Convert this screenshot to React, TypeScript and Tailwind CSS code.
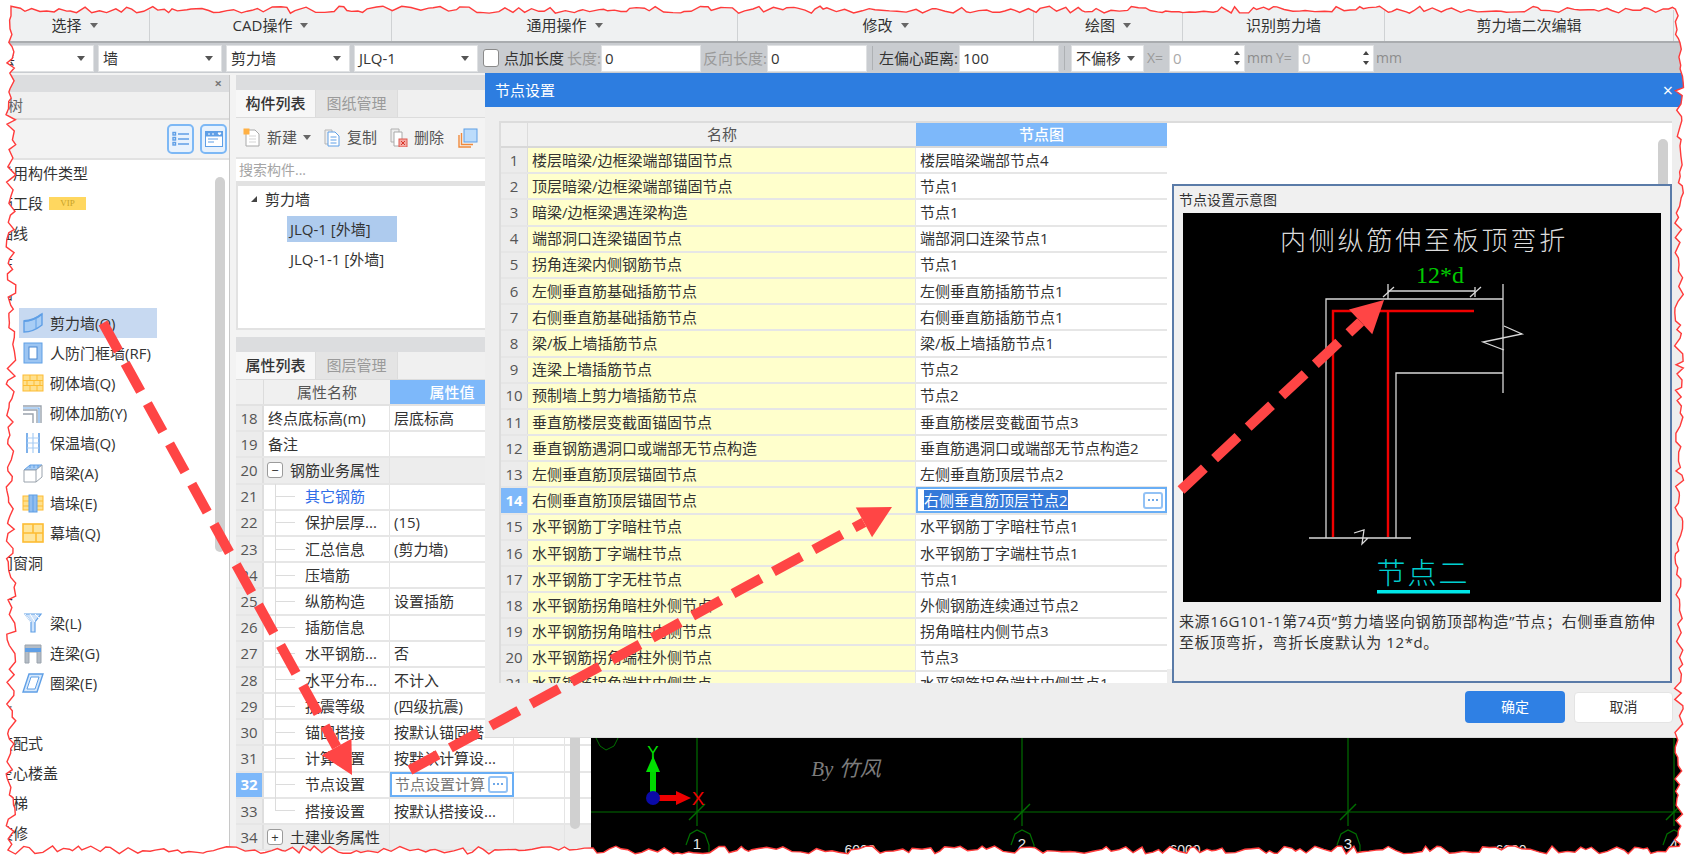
import type { ReactNode } from 'react';

const cjk = "font-['Open_Sans','Noto_Sans_CJK_SC',sans-serif]";

const nodeRows: [string, string][] = [
  ['楼层暗梁/边框梁端部锚固节点', '楼层暗梁端部节点4'],
  ['顶层暗梁/边框梁端部锚固节点', '节点1'],
  ['暗梁/边框梁遇连梁构造', '节点1'],
  ['端部洞口连梁锚固节点', '端部洞口连梁节点1'],
  ['拐角连梁内侧钢筋节点', '节点1'],
  ['左侧垂直筋基础插筋节点', '左侧垂直筋插筋节点1'],
  ['右侧垂直筋基础插筋节点', '右侧垂直筋插筋节点1'],
  ['梁/板上墙插筋节点', '梁/板上墙插筋节点1'],
  ['连梁上墙插筋节点', '节点2'],
  ['预制墙上剪力墙插筋节点', '节点2'],
  ['垂直筋楼层变截面锚固节点', '垂直筋楼层变截面节点3'],
  ['垂直钢筋遇洞口或端部无节点构造', '垂直筋遇洞口或端部无节点构造2'],
  ['左侧垂直筋顶层锚固节点', '左侧垂直筋顶层节点2'],
  ['右侧垂直筋顶层锚固节点', '右侧垂直筋顶层节点2'],
  ['水平钢筋丁字暗柱节点', '水平钢筋丁字暗柱节点1'],
  ['水平钢筋丁字端柱节点', '水平钢筋丁字端柱节点1'],
  ['水平钢筋丁字无柱节点', '节点1'],
  ['水平钢筋拐角暗柱外侧节点', '外侧钢筋连续通过节点2'],
  ['水平钢筋拐角暗柱内侧节点', '拐角暗柱内侧节点3'],
  ['水平钢筋拐角端柱外侧节点', '节点3'],
  ['水平钢筋拐角端柱内侧节点', '水平钢筋拐角端柱内侧节点1'],
];

type Prop = { n: number; name: string; value?: string; kind?: 'plain' | 'section' | 'open' | 'link' | 'child' | 'edit'; last?: boolean };

const props: Prop[] = [
  { n: 18, name: '终点底标高(m)', value: '层底标高', kind: 'plain' },
  { n: 19, name: '备注', kind: 'plain' },
  { n: 20, name: '钢筋业务属性', kind: 'open' },
  { n: 21, name: '其它钢筋', kind: 'link' },
  { n: 22, name: '保护层厚...', value: '(15)' },
  { n: 23, name: '汇总信息', value: '(剪力墙)' },
  { n: 24, name: '压墙筋' },
  { n: 25, name: '纵筋构造', value: '设置插筋' },
  { n: 26, name: '插筋信息' },
  { n: 27, name: '水平钢筋...', value: '否' },
  { n: 28, name: '水平分布...', value: '不计入' },
  { n: 29, name: '抗震等级', value: '(四级抗震)' },
  { n: 30, name: '锚固搭接', value: '按默认锚固搭...' },
  { n: 31, name: '计算设置', value: '按默认计算设...' },
  { n: 32, name: '节点设置', value: '节点设置计算', kind: 'edit' },
  { n: 33, name: '搭接设置', value: '按默认搭接设...', last: true },
  { n: 34, name: '土建业务属性', kind: 'section' },
];

function Caret({ className = 'border-t-[#666]' }: { className?: string }) {
  return <span className={`inline-block w-0 h-0 border-x-[4px] border-x-transparent border-t-[5px] ${className}`} />;
}

function RibbonCell({ w, label, caret = true }: { w: string; label: string; caret?: boolean }) {
  return (
    <div className={`${w} shrink-0 h-[31px] flex items-center justify-center gap-[8px] border-r border-[#cfd2d4] text-[15px] text-[#333]`}>
      <span>{label}</span>
      {caret && <Caret />}
    </div>
  );
}

function Select({ w, label, className = '' }: { w: string; label: string; className?: string }) {
  return (
    <div className={`${w} ${className} shrink-0 h-[27px] bg-white border border-[#dfe1e3] flex items-center justify-between pl-[4px] pr-[8px] text-[15px] text-[#333]`}>
      <span>{label}</span>
      <Caret className="border-t-[#555]" />
    </div>
  );
}

function Field({ w, value, dim = false }: { w: string; value: string; dim?: boolean }) {
  return (
    <div className={`${w} shrink-0 h-[27px] bg-white border border-[#dfe1e3] flex items-center pl-[3px] text-[15px] ${dim ? 'text-[#aaa]' : 'text-[#333]'}`}>
      {value}
    </div>
  );
}

function Spin({ value }: { value: string }) {
  return (
    <div className="w-[76px] shrink-0 h-[27px] bg-white border border-[#dfe1e3] flex items-center justify-between pl-[3px] pr-[4px] text-[15px] text-[#aaa]">
      <span>{value}</span>
      <span className="flex flex-col gap-[6px]">
        <span className="w-0 h-0 border-x-[3px] border-x-transparent border-b-[4px] border-b-[#444]" />
        <span className="w-0 h-0 border-x-[3px] border-x-transparent border-t-[4px] border-t-[#444]" />
      </span>
    </div>
  );
}

function OptionsBar() {
  return (
    <div className="h-[32px] bg-[#c9ccd0] border-t-2 border-[#a9acaf] flex items-center shrink-0">
      <Select w="w-[114px]" label="首层" className="-ml-[20px]" />
      <Select w="w-[124px]" label="墙" className="ml-[4px]" />
      <Select w="w-[124px]" label="剪力墙" className="ml-[4px]" />
      <Select w="w-[124px]" label="JLQ-1" className="ml-[4px]" />
      <span className="ml-[5px] w-[16px] h-[18px] bg-white border border-[#8a8a8a] rounded-[3px] shrink-0" />
      <span className="ml-[5px] text-[15px] text-[#333] w-[63px] shrink-0 whitespace-nowrap">点加长度</span>
      <span className="text-[15px] text-[#9a9a9a] w-[34px] shrink-0 whitespace-nowrap">长度:</span>
      <Field w="w-[100px]" value="0" />
      <span className="ml-[2px] text-[15px] text-[#9a9a9a] w-[64px] shrink-0 whitespace-nowrap">反向长度:</span>
      <Field w="w-[100px]" value="0" />
      <span className="ml-[5px] w-px h-[24px] bg-[#aeb1b4]" />
      <span className="ml-[6px] text-[15px] text-[#333] w-[80px] shrink-0 whitespace-nowrap">左偏心距离:</span>
      <Field w="w-[100px]" value="100" />
      <span className="ml-[5px] w-px h-[24px] bg-[#aeb1b4]" />
      <Select w="w-[73px]" label="不偏移" className="ml-[6px]" />
      <span className="ml-[3px] w-[22px] shrink-0 text-[14px] text-[#9a9a9a]">X=</span>
      <Spin value="0" />
      <span className="ml-[2px] w-[29px] shrink-0 text-[14px] text-[#8d8d8d]">mm</span>
      <span className="w-[22px] shrink-0 text-[14px] text-[#9a9a9a]">Y=</span>
      <Spin value="0" />
      <span className="ml-[2px] text-[14px] text-[#8d8d8d]">mm</span>
    </div>
  );
}

// 左侧构件树的小图标
function TreeIcon({ name }: { name: string }) {
  const b = '#5f9fe6';
  const y = '#fdbc33';
  const g = '#9aa3ad';
  const common = { width: 22, height: 22, viewBox: '0 0 22 22', fill: 'none' };
  switch (name) {
    case 'shear':
      return (
        <svg {...common}>
          <path d="M2 9C9 9 15 6 20 2V13C15 17 9 20 2 20Z" fill="#a8cdf5" stroke={b} strokeWidth="1.4" />
          <path d="M2 9C9 9 15 6 20 2" stroke={b} strokeWidth="2" />
          <path d="M14 7V16" stroke={b} strokeWidth="1" />
        </svg>
      );
    case 'door':
      return (
        <svg {...common}>
          <rect x="2" y="1" width="18" height="20" fill="#9cc5f2" stroke={b} />
          <rect x="7" y="5" width="8" height="12" fill="#fff" stroke="#4a88d0" />
        </svg>
      );
    case 'brick':
      return (
        <svg {...common}>
          <rect x="1" y="3" width="20" height="16" fill="#fee08e" stroke={y} />
          <path d="M1 8.5H21M1 13.5H21M8 3V8.5M15 3V8.5M5 8.5V13.5M12 8.5V13.5M18 8.5V13.5M8 13.5V19M15 13.5V19" stroke={y} />
        </svg>
      );
    case 'rebar':
      return (
        <svg {...common}>
          <path d="M1 4H19V21M1 8H15V21M1 12H11V21" stroke={g} strokeWidth="1.4" />
          <path d="M1 6H17V21" stroke="#6aa7ea" strokeWidth="1.2" />
        </svg>
      );
    case 'insul':
      return (
        <svg {...common}>
          <path d="M5 1V21M17 1V21" stroke={b} strokeWidth="1.6" />
          <path d="M11 1V21M5 6H17M5 11H17M5 16H17" stroke="#a9cdf4" strokeWidth="1.2" />
        </svg>
      );
    case 'hidden':
      return (
        <svg {...common}>
          <path d="M2 8L8 3H20L14 8Z" fill="#a8cdf5" stroke={b} />
          <path d="M2 8H14V20H2ZM14 8L20 3V15L14 20" fill="#fff" stroke={g} />
          <path d="M8 3V6M12 3V6M16 3V6" stroke={b} />
        </svg>
      );
    case 'pier':
      return (
        <svg {...common}>
          <rect x="1" y="4" width="20" height="14" fill="#fee08e" stroke={y} />
          <path d="M1 9H21M1 14H21" stroke={y} />
          <rect x="7" y="3" width="8" height="17" fill="#8fbdf0" stroke={b} />
          <path d="M11 3V20" stroke={b} />
        </svg>
      );
    case 'curtain':
      return (
        <svg {...common}>
          <rect x="1" y="2" width="20" height="18" fill="#fee59c" stroke={y} strokeWidth="1.6" />
          <path d="M1 11H21M11 2V11M14 11V20" stroke={y} strokeWidth="1.6" />
        </svg>
      );
    case 'beam':
      return (
        <svg {...common}>
          <path d="M3 2H19L13 10V20H9V10Z" fill="#cfe3fa" stroke={b} strokeWidth="1.2" />
          <path d="M3 2L9 10M8 2L13 10M13 2L17 6" stroke="#fff" />
        </svg>
      );
    case 'link':
      return (
        <svg {...common}>
          <path d="M3 3H19V21H15V10H7V21H3Z" fill="#b4bcc5" stroke={g} />
          <rect x="3" y="6" width="16" height="4" fill="#5f9fe6" />
        </svg>
      );
    default:
      return (
        <svg {...common}>
          <path d="M7 2H21L15 20H1Z" fill="#d6e8fb" stroke={b} strokeWidth="1.4" />
          <path d="M9 5H17L13 17H5Z" fill="#fff" stroke={b} />
        </svg>
      );
  }
}

function TopItem({ label, vip }: { label: string; vip?: boolean }) {
  return (
    <div className="h-[30px] -ml-[2px] flex items-center gap-[6px] text-[15px] text-[#333] whitespace-nowrap">
      <span>{label}</span>
      {vip && (
        <span className="w-[37px] h-[13px] bg-[#ffd75f] text-[#c9a227] text-[9px] leading-[13px] text-center font-['Liberation_Serif',serif]">VIP</span>
      )}
    </div>
  );
}

function ChildItem({ icon, label, active }: { icon: string; label: string; active?: boolean }) {
  return (
    <div className={`h-[30px] ml-[19px] w-[138px] flex items-center gap-[6px] pl-[3px] text-[15px] text-[#333] whitespace-nowrap ${active ? 'bg-[#c7d9f1]' : ''}`}>
      <TreeIcon name={icon} />
      <span>{label}</span>
    </div>
  );
}

function LeftPanel() {
  return (
    <div className="w-[230px] shrink-0 flex flex-col border-r border-[#c8c8c8] overflow-hidden relative">
      <div className="h-[17px] bg-[#dcdddf] flex items-center justify-end pr-[7px] text-[13px] font-bold text-[#777]">×</div>
      <div className="h-[28px] bg-[#f0f0f0] border-b-2 border-[#dcdcdc] flex items-center -ml-[22px] text-[15px] text-[#666]">导航树</div>
      <div className="h-[40px] bg-[#f3f3f3] border-b-2 border-[#e2e2e2] flex items-center justify-end gap-[6px] pr-[2px]">
        <div className="w-[27px] h-[30px] rounded-[5px] border-2 border-[#7db8f5] bg-[#e8f2fd] flex items-center justify-center">
          <svg width="18" height="16" viewBox="0 0 18 16" stroke="#5f9fe6" strokeWidth="1.4" fill="none">
            <rect x="1" y="1.5" width="2.5" height="2.5" /><rect x="1" y="6.5" width="2.5" height="2.5" /><rect x="1" y="11.5" width="2.5" height="2.5" />
            <path d="M6 3H17M6 8H17M6 13H17" />
          </svg>
        </div>
        <div className="w-[27px] h-[30px] rounded-[5px] border-2 border-[#7db8f5] bg-[#e8f2fd] flex items-center justify-center">
          <svg width="18" height="16" viewBox="0 0 18 16">
            <rect x="0.5" y="0.5" width="17" height="15" fill="#fff" stroke="#5f9fe6" />
            <rect x="0.5" y="0.5" width="17" height="5" fill="#5f9fe6" />
            <path d="M3 3H5M7 3H9M13 2H16L14.5 4Z" stroke="#fff" fill="#fff" />
            <path d="M3 8H13M3 11H9" stroke="#5f9fe6" />
          </svg>
        </div>
      </div>
      <div className="flex-1 bg-white">
        <div className="-mt-[2px]">
          <TopItem label="常用构件类型" />
          <TopItem label="施工段" vip />
          <TopItem label="轴线" />
          <TopItem label="柱" />
          <TopItem label="墙" />
          <ChildItem icon="shear" label="剪力墙(Q)" active />
          <ChildItem icon="door" label="人防门框墙(RF)" />
          <ChildItem icon="brick" label="砌体墙(Q)" />
          <ChildItem icon="rebar" label="砌体加筋(Y)" />
          <ChildItem icon="insul" label="保温墙(Q)" />
          <ChildItem icon="hidden" label="暗梁(A)" />
          <ChildItem icon="pier" label="墙垛(E)" />
          <ChildItem icon="curtain" label="幕墙(Q)" />
          <TopItem label="门窗洞" />
          <TopItem label="梁" />
          <ChildItem icon="beam" label="梁(L)" />
          <ChildItem icon="link" label="连梁(G)" />
          <ChildItem icon="ring" label="圈梁(E)" />
          <TopItem label="板" />
          <TopItem label="装配式" />
          <TopItem label="空心楼盖" />
          <TopItem label="楼梯" />
          <TopItem label="装修" />
        </div>
      </div>
      <div className="absolute left-[215px] top-[102px] w-[10px] h-[375px] rounded-[5px] bg-[#d0d0d0]" />
    </div>
  );
}

function PanelTabs({ a, b }: { a: string; b: string }) {
  return (
    <div className="h-[28px] bg-[#f0f0f0] border-b border-[#dcdcdc] flex shrink-0 text-[15px]">
      <div className="w-[80px] bg-[#f7f7f7] flex items-center justify-center font-medium text-[#333] border-r border-[#dcdcdc]">{a}</div>
      <div className="w-[82px] bg-[#e4e4e4] flex items-center justify-center text-[#9a9a9a] border-r border-[#dcdcdc]">{b}</div>
    </div>
  );
}

function Tool({ icon, label, w, caret }: { icon: ReactNode; label: string; w: string; caret?: boolean }) {
  return (
    <div className={`${w} shrink-0 flex items-center gap-[6px] text-[15px] text-[#555] whitespace-nowrap`}>
      {icon}
      <span>{label}</span>
      {caret && <Caret />}
    </div>
  );
}

function ComponentList() {
  return (
    <>
      <div className="h-[15px] bg-[#dcdddf] shrink-0" />
      <PanelTabs a="构件列表" b="图纸管理" />
      <div className="h-[41px] bg-[#f3f3f3] border-b-2 border-[#e2e2e2] flex items-center pl-[7px] shrink-0">
        <Tool
          w="w-[81px]"
          label="新建"
          caret
          icon={
            <svg width="18" height="19" viewBox="0 0 18 19" fill="none">
              <path d="M3 2H12L16 6V18H3Z" fill="#fff" stroke="#a9a9a9" />
              <path d="M6 8H13M6 11H13M6 14H13" stroke="#d5d5d5" />
              <rect x="0.5" y="0.5" width="6" height="6" fill="#ffb043" />
            </svg>
          }
        />
        <Tool
          w="w-[66px]"
          label="复制"
          icon={
            <svg width="17" height="19" viewBox="0 0 17 19" fill="none">
              <path d="M1 2H8V16H1Z" fill="#eee" stroke="#b5b5b5" />
              <path d="M4 4H11L15 8V18H4Z" fill="#fff" stroke="#5f9fe6" />
              <path d="M6.5 9H12.5M6.5 12H12.5M6.5 15H12.5" stroke="#5f9fe6" />
            </svg>
          }
        />
        <Tool
          w="w-[68px]"
          label="删除"
          icon={
            <svg width="18" height="19" viewBox="0 0 18 19" fill="none">
              <path d="M1 1H9V14H1Z" fill="#eee" stroke="#b0b0b0" />
              <path d="M4 4H12V18H4Z" fill="#fff" stroke="#a9a9a9" />
              <rect x="9" y="11" width="8" height="8" fill="#f4a9a3" stroke="#e05a50" />
              <path d="M11 13L15 17M15 13L11 17" stroke="#d8352a" />
            </svg>
          }
        />
        <svg width="20" height="20" viewBox="0 0 20 20" fill="none" className="shrink-0">
          <path d="M1 7V19H13" stroke="#f08a3c" strokeWidth="1.4" />
          <path d="M3.5 5V16.5H15" stroke="#f08a3c" strokeWidth="1.4" />
          <rect x="6" y="1" width="13" height="13" fill="#bcdcfb" stroke="#5f9fe6" />
        </svg>
      </div>
      <div className="h-[24px] bg-white border-b-2 border-[#e2e2e2] flex items-center pl-[3px] text-[14px] text-[#a5a5a5] shrink-0">搜索构件...</div>
      <div className="h-[147px] bg-white border-2 border-t-[3px] border-[#e2e2e2] border-r-0 shrink-0">
        <div className="h-[26px] flex items-center pl-[13px] gap-[8px] text-[15px] text-[#333]">
          <span className="w-0 h-0 border-l-[6px] border-l-transparent border-b-[6px] border-b-[#444]" />
          <span>剪力墙</span>
        </div>
        <div className="mt-[4px] ml-[49px] w-[110px] h-[26px] bg-[#aecbee] flex items-center pl-[3px] text-[15px] text-[#333] whitespace-nowrap">JLQ-1 [外墙]</div>
        <div className="ml-[49px] h-[34px] flex items-center pl-[3px] text-[15px] text-[#333] whitespace-nowrap">JLQ-1-1 [外墙]</div>
      </div>
      <div className="h-[7px] shrink-0 bg-[#f3f3f3]" />
    </>
  );
}

function PropRow({ p }: { p: Prop }) {
  const sec = p.kind === 'section' || p.kind === 'open';
  const indented = !sec && p.kind !== 'plain';
  return (
    <div className={`h-[26.2px] flex text-[15px] border-b-2 border-[#e6e6e6] ${sec ? 'bg-[#ededed]' : 'bg-white'}`}>
      <div className={`w-[28px] shrink-0 flex items-center justify-center border-r-2 border-[#dedede] ${p.kind === 'edit' ? 'bg-[#7db8fa] text-white font-bold' : 'bg-[#ececec] text-[#555]'}`}>
        {p.n}
      </div>
      <div className="w-[126px] shrink-0 flex items-center relative border-r border-[#e4e4e4] whitespace-nowrap text-[#333]">
        {sec && (
          <span className="ml-[3px] mr-[7px] w-[16px] h-[16px] border border-[#9b9b9b] rounded-[3px] bg-white flex items-center justify-center text-[13px] leading-none">
            {p.kind === 'open' ? '−' : '+'}
          </span>
        )}
        {indented && (
          <>
            <span className={`absolute left-[11px] top-[-1px] w-px bg-[#dcdcdc] ${p.last ? 'h-[13px]' : 'h-[28px]'}`} />
            <span className="ml-[11px] w-[20px] h-px bg-[#dcdcdc] mr-[10px]" />
          </>
        )}
        {p.kind === 'plain' && <span className="w-[4px]" />}
        <span className={p.kind === 'link' ? 'text-[#2f6de8]' : ''}>{p.name}</span>
      </div>
      {p.kind === 'edit' ? (
        <div className="w-[124px] shrink-0 border-2 border-[#69aef5] -mt-px bg-white flex items-center justify-between pl-[3px] pr-[4px] text-[#777] whitespace-nowrap">
          <span>{p.value}</span>
          <Dots />
        </div>
      ) : (
        <div className={`w-[124px] shrink-0 flex items-center pl-[4px] whitespace-nowrap text-[#333] ${sec ? '' : 'border-r border-[#e4e4e4]'}`}>{p.value}</div>
      )}
      <div className="w-[51px] shrink-0 border-r border-[#e4e4e4]" />
    </div>
  );
}

function Dots() {
  return (
    <span className="w-[20px] h-[17px] shrink-0 rounded-[3px] border-2 border-[#93c2f5] bg-white flex items-center justify-center gap-[2px]">
      <span className="w-[2px] h-[2px] bg-[#6fa8e8]" />
      <span className="w-[2px] h-[2px] bg-[#6fa8e8]" />
      <span className="w-[2px] h-[2px] bg-[#6fa8e8]" />
    </span>
  );
}

function PropertyList() {
  return (
    <div className="flex-1 flex flex-col relative overflow-hidden">
      <div className="h-[15px] bg-[#dcdddf] shrink-0" />
      <PanelTabs a="属性列表" b="图层管理" />
      <div className="h-[26px] flex text-[15px] shrink-0 border-b-2 border-[#e2e2e2]">
        <div className="w-[28px] bg-[#f0f0f0] border-r border-[#dcdcdc]" />
        <div className="w-[126px] bg-[#f0f0f0] flex items-center justify-center text-[#555]">属性名称</div>
        <div className="w-[124px] bg-[#7db8fa] flex items-center justify-center text-white font-medium">属性值</div>
        <div className="w-[51px] bg-[#f0f0f0]" />
      </div>
      <div className="flex-1">
        {props.map((p) => (
          <PropRow key={p.n} p={p} />
        ))}
      </div>
      <div className="absolute left-[334px] top-[90px] w-[10px] h-[402px] rounded-[5px] bg-[#d0d0d0]" />
    </div>
  );
}

function CadCanvas() {
  const green = '#006f00';
  const axes = [697, 1022, 1348, 1674];
  return (
    <div className="flex-1 bg-black overflow-hidden relative">
      <svg width="1098" height="784" viewBox="591 75 1098 784" className="absolute left-0 top-0">
        {axes.map((x, i) => (
          <g key={x}>
            <path d={`M${x} 84V826`} stroke={green} strokeWidth="1.2" />
            <path d={`M${x - 8} 820L${x + 8} 804`} stroke={green} strokeWidth="1.4" />
            <path d={`M${x - 11} 845L${x - 7} 834L${x} 830L${x + 8} 834L${x + 12} 845L${x + 12} 858`} stroke={green} fill="none" strokeWidth="1.2" />
            <text x={x} y="849" fill="#e8e8e8" fontSize="15" textAnchor="middle" fontFamily="Liberation Sans, sans-serif">
              {i + 1}
            </text>
          </g>
        ))}
        <path d="M591 812H1689" stroke={green} strokeWidth="1.2" />
        <path d="M596 738L600 746L606 750L614 746L618 738" stroke={green} fill="none" />
        <text x="860" y="855" fill="#e8e8e8" fontSize="14" textAnchor="middle" fontFamily="Liberation Sans, sans-serif">6000</text>
        <text x="1185" y="855" fill="#e8e8e8" fontSize="14" textAnchor="middle" fontFamily="Liberation Sans, sans-serif">6000</text>
        <text x="1511" y="855" fill="#e8e8e8" fontSize="14" textAnchor="middle" fontFamily="Liberation Sans, sans-serif">6000</text>
        <rect x="650" y="763" width="6" height="30" fill="#00d800" />
        <path d="M653 756L660 772H646Z" fill="#00e000" />
        <text x="653" y="758" fill="#00e000" fontSize="17" textAnchor="middle" fontFamily="Liberation Sans, sans-serif">Y</text>
        <rect x="658" y="795" width="22" height="6" fill="#ee0000" />
        <path d="M691 798L676 791V805Z" fill="#ee0000" />
        <circle cx="653" cy="798" r="7" fill="#0a0aa8" />
        <text x="698" y="805" fill="#ee0000" fontSize="19" textAnchor="middle" fontFamily="Liberation Sans, sans-serif">X</text>
        <text x="846" y="776" fill="#7c7c7c" fontSize="21" fontStyle="italic" textAnchor="middle" fontFamily="Liberation Serif, Noto Sans CJK SC, serif">By 竹风</text>
      </svg>
    </div>
  );
}

function NodeDiagram() {
  return (
    <svg width="478" height="389" viewBox="1183 213 478 389" className="block bg-black shrink-0">
      <text x="1424" y="250" fill="#dcdcdc" fontSize="26" fontWeight="300" letterSpacing="2.8" textAnchor="middle" fontFamily="Noto Sans CJK SC, sans-serif">
        内侧纵筋伸至板顶弯折
      </text>
      <text x="1440" y="283" fill="#00c800" fontSize="24" textAnchor="middle" fontFamily="Liberation Serif, serif">12*d</text>
      <g stroke="#d8d8d8" strokeWidth="1.3" fill="none">
        <path d="M1326 538V299H1503M1503 284V393M1396 538V373H1503" />
        <path d="M1388 284V299M1475 287V297M1388 291H1475" />
        <path d="M1383 297L1394 287M1470 297L1481 287" />
        <path d="M1504 326L1522 334L1483 342L1504 350" />
        <path d="M1309 538H1411M1354 533L1364 530L1362 544L1368 538" />
      </g>
      <path d="M1333 537V311H1474M1388 311V537" stroke="#f00000" strokeWidth="2.4" fill="none" />
      <text x="1423" y="584" fill="#00cfd0" fontSize="29" fontWeight="300" letterSpacing="2" textAnchor="middle" fontFamily="Noto Sans CJK SC, sans-serif">节点二</text>
      <rect x="1377" y="590" width="93" height="3.5" fill="#00e8ea" />
    </svg>
  );
}

function NodeDialog() {
  return (
    <div className="absolute left-[485px] top-[73px] w-[1200px] h-[665px] bg-[#eeeeee] flex flex-col border-b border-[#dcdcdc]">
      <div className="h-[34px] bg-[#2d7de0] flex items-center justify-between pl-[10px] pr-[12px] text-[15px] text-white shrink-0">
        <span>节点设置</span>
        <span className="text-[18px] leading-none">×</span>
      </div>
      <div className="flex pl-[14px] pt-[14px] h-[562px] shrink-0">
        <div className="w-[668px] shrink-0 h-[562px] overflow-hidden border-t-2 border-l-2 border-[#dcdcdc]">
          <div className="h-[25px] flex text-[15px] border-b-2 border-[#d8d8d8]">
            <div className="w-[27px] bg-[#f0f0f0] border-r border-[#dcdcdc]" />
            <div className="w-[388px] bg-[#f0f0f0] flex items-center justify-center text-[#555]">名称</div>
            <div className="flex-1 bg-[#7db8fa] flex items-center justify-center text-white font-medium">节点图</div>
          </div>
          {nodeRows.map(([name, node], i) => (
            <div key={i} className="h-[26.2px] flex text-[15px] text-[#333] border-b-2 border-[#e6e6e6] whitespace-nowrap">
              <div className={`w-[27px] shrink-0 flex items-center justify-center border-r border-[#dcdcdc] ${i === 13 ? 'bg-[#7db8fa] text-white font-bold' : 'bg-[#ececec] text-[#555]'}`}>
                {i + 1}
              </div>
              <div className="w-[388px] shrink-0 bg-[#ffffcc] flex items-center pl-[4px] border-r border-[#e6e6e6]">{name}</div>
              {i === 13 ? (
                <div className="flex-1 bg-white border-2 border-[#69aef5] -mt-px flex items-center justify-between pl-[6px] pr-[2px]">
                  <span className="bg-[#3479d9] text-white leading-[20px]">{node}</span>
                  <Dots />
                </div>
              ) : (
                <div className="flex-1 bg-white flex items-center pl-[4px]">{node}</div>
              )}
            </div>
          ))}
        </div>
        <div className="w-[505px] shrink-0 bg-white border-t-2 border-[#dcdcdc] relative">
          <div className="absolute right-[4px] top-[16px] w-[10px] h-[60px] rounded-[5px] bg-[#cfcfcf]" />
          <div className="absolute left-[5px] top-[61px] w-[500px] h-[499px] bg-[#f0f0f0] border-2 border-[#5a7ba8] flex flex-col pl-[9px]">
            <div className="h-[27px] -ml-[4px] flex items-center text-[14px] text-[#333] shrink-0">节点设置示意图</div>
            <NodeDiagram />
            <p className="mt-[9px] -ml-[4px] w-[480px] text-[15px] tracking-[0.6px] leading-[21px] text-[#333]">
              来源16G101-1第74页“剪力墙竖向钢筋顶部构造”节点；右侧垂直筋伸<br />至板顶弯折，弯折长度默认为 12*d。
            </p>
          </div>
        </div>
      </div>
      <div className="flex-1 flex items-center gap-[9px] pl-[980px] pt-[8px]">
        <button className="w-[100px] h-[32px] rounded-[4px] bg-[#2f80e4] text-white text-[14px]">确定</button>
        <button className="w-[99px] h-[31px] rounded-[4px] bg-white border border-[#e4e4e4] text-[#333] text-[14px]">取消</button>
      </div>
    </div>
  );
}

// 红色虚线箭头
function Arrow({ x1, y1, x2, y2 }: { x1: number; y1: number; x2: number; y2: number }) {
  const len = Math.hypot(x2 - x1, y2 - y1);
  const ux = (x2 - x1) / len;
  const uy = (y2 - y1) / len;
  const bx = x2 - ux * 32;
  const by = y2 - uy * 32;
  const head = `${x2},${y2} ${bx - uy * 17},${by + ux * 17} ${bx + uy * 17},${by - ux * 17}`;
  return (
    <g>
      <line x1={x1} y1={y1} x2={bx} y2={by} stroke="#ff4545" strokeWidth="10" strokeDasharray="32 14" />
      <polygon points={head} fill="#ff4545" />
    </g>
  );
}

// 截图撕边：用固定种子生成的锯齿轮廓
function tornEdge() {
  let s = 7;
  const rnd = () => {
    s = (s * 16807) % 2147483647;
    return s / 2147483647;
  };
  const pts: string[] = [];
  const L = 11;
  const T = 9;
  const R = 1679;
  const B = 850;
  for (let x = L; x < R; x += 3 + rnd() * 7) pts.push(`${x.toFixed(1)},${(T + (rnd() - 0.4) * 7).toFixed(1)}`);
  for (let y = T; y < B; y += 3 + rnd() * 6) pts.push(`${(R + (rnd() - 0.5) * 9).toFixed(1)},${y.toFixed(1)}`);
  for (let x = R; x > L; x -= 3 + rnd() * 7) pts.push(`${x.toFixed(1)},${(B + (rnd() - 0.5) * 8).toFixed(1)}`);
  for (let y = B; y > T; y -= 3 + rnd() * 6) pts.push(`${(L + (rnd() - 0.5) * 10).toFixed(1)},${y.toFixed(1)}`);
  return `M${pts.join('L')}Z`;
}

const edge = tornEdge();

function Annotations() {
  return (
    <svg width="1689" height="859" viewBox="0 0 1689 859" className="absolute left-0 top-0 pointer-events-none">
      <Arrow x1={103} y1={323} x2={352} y2={775} />
      <Arrow x1={410} y1={770} x2={892} y2={507} />
      <Arrow x1={1181} y1={490} x2={1384} y2={300} />
      <path d={`M0 0H1689V859H0Z${edge}`} fill="#fff" fillRule="evenodd" />
      <path d={edge} fill="none" stroke="#ff3b3b" strokeWidth="1.4" />
    </svg>
  );
}

export default function App() {
  return (
    <div className={`relative w-[1689px] h-[859px] overflow-hidden bg-white flex flex-col leading-tight ${cjk}`}>
      <div className="h-[41px] pt-[10px] bg-[#eff1f2] flex shrink-0">
        <RibbonCell w="w-[150px]" label="选择" />
        <RibbonCell w="w-[242px]" label="CAD操作" />
        <RibbonCell w="w-[346px]" label="通用操作" />
        <RibbonCell w="w-[296px]" label="修改" />
        <RibbonCell w="w-[149px]" label="绘图" />
        <RibbonCell w="w-[202px]" label="识别剪力墙" caret={false} />
        <RibbonCell w="w-[289px]" label="剪力墙二次编辑" caret={false} />
      </div>
      <OptionsBar />
      <div className="flex-1 flex min-h-0 pt-[2px] bg-[#f3f3f3]">
        <LeftPanel />
        <div className="w-[6px] shrink-0 bg-[#f3f3f3]" />
        <div className="w-[355px] shrink-0 flex flex-col bg-white">
          <ComponentList />
          <PropertyList />
        </div>
        <CadCanvas />
      </div>
      <NodeDialog />
      <Annotations />
    </div>
  );
}
